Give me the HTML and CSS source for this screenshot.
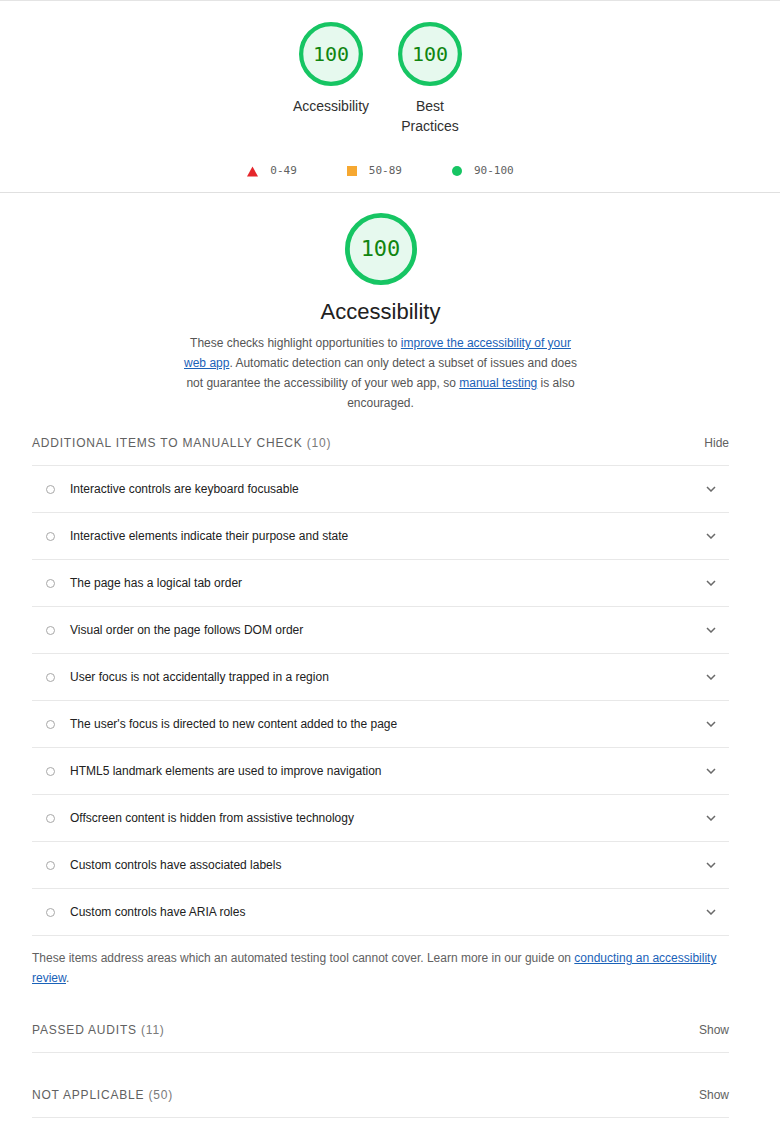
FILE: index.html
```html
<!DOCTYPE html>
<html lang="en">
<head>
<meta charset="utf-8">
<title>Lighthouse Report</title>
<link rel="stylesheet" href="styles.css">
</head>
<body>
<div class="page">
  <header class="scores">
    <div class="gauges">
      <a class="gauge" href="#a11y">
        <svg class="gauge-svg" viewBox="0 0 120 120"><circle class="g-base" cx="60" cy="60" r="56"/><circle class="g-arc" cx="60" cy="60" r="56"/></svg>
        <span class="gauge-num">100</span>
        <span class="gauge-label">Accessibility</span>
      </a>
      <a class="gauge" href="#bp">
        <svg class="gauge-svg" viewBox="0 0 120 120"><circle class="g-base" cx="60" cy="60" r="56"/><circle class="g-arc" cx="60" cy="60" r="56"/></svg>
        <span class="gauge-num">100</span>
        <span class="gauge-label">Best Practices</span>
      </a>
    </div>
    <div class="legend">
      <span class="legend-item"><svg class="legend-icon" viewBox="0 0 10 10"><polygon points="5,0.5 10,9.5 0,9.5" fill="#e5262b"/></svg>0-49</span>
      <span class="legend-item"><span class="legend-square"></span>50-89</span>
      <span class="legend-item"><span class="legend-dot"></span>90-100</span>
    </div>
  </header>

  <section class="category" id="a11y">
    <div class="cat-head">
      <div class="gauge big">
        <svg class="gauge-svg" viewBox="0 0 120 120"><circle class="g-base" cx="60" cy="60" r="56"/><circle class="g-arc" cx="60" cy="60" r="56"/></svg>
        <span class="gauge-num">100</span>
      </div>
      <h2 class="cat-title">Accessibility</h2>
      <p class="cat-desc">These checks highlight opportunities to <a href="#">improve the accessibility of your web app</a>. Automatic detection can only detect a subset of issues and does not guarantee the accessibility of your web app, so <a href="#">manual testing</a> is also encouraged.</p>
    </div>

    <div class="group">
      <div class="group-head">
        <span class="group-title">Additional items to manually check <span class="count">(10)</span></span>
        <span class="toggle">Hide</span>
      </div>
      <ul class="audits">
        <li class="audit"><span class="manual-icon"></span><span class="audit-title">Interactive controls are keyboard focusable</span><svg class="chevron" viewBox="0 0 10 6"><path d="M1 1 L5 5 L9 1"/></svg></li>
        <li class="audit"><span class="manual-icon"></span><span class="audit-title">Interactive elements indicate their purpose and state</span><svg class="chevron" viewBox="0 0 10 6"><path d="M1 1 L5 5 L9 1"/></svg></li>
        <li class="audit"><span class="manual-icon"></span><span class="audit-title">The page has a logical tab order</span><svg class="chevron" viewBox="0 0 10 6"><path d="M1 1 L5 5 L9 1"/></svg></li>
        <li class="audit"><span class="manual-icon"></span><span class="audit-title">Visual order on the page follows DOM order</span><svg class="chevron" viewBox="0 0 10 6"><path d="M1 1 L5 5 L9 1"/></svg></li>
        <li class="audit"><span class="manual-icon"></span><span class="audit-title">User focus is not accidentally trapped in a region</span><svg class="chevron" viewBox="0 0 10 6"><path d="M1 1 L5 5 L9 1"/></svg></li>
        <li class="audit"><span class="manual-icon"></span><span class="audit-title">The user's focus is directed to new content added to the page</span><svg class="chevron" viewBox="0 0 10 6"><path d="M1 1 L5 5 L9 1"/></svg></li>
        <li class="audit"><span class="manual-icon"></span><span class="audit-title">HTML5 landmark elements are used to improve navigation</span><svg class="chevron" viewBox="0 0 10 6"><path d="M1 1 L5 5 L9 1"/></svg></li>
        <li class="audit"><span class="manual-icon"></span><span class="audit-title">Offscreen content is hidden from assistive technology</span><svg class="chevron" viewBox="0 0 10 6"><path d="M1 1 L5 5 L9 1"/></svg></li>
        <li class="audit"><span class="manual-icon"></span><span class="audit-title">Custom controls have associated labels</span><svg class="chevron" viewBox="0 0 10 6"><path d="M1 1 L5 5 L9 1"/></svg></li>
        <li class="audit"><span class="manual-icon"></span><span class="audit-title">Custom controls have ARIA roles</span><svg class="chevron" viewBox="0 0 10 6"><path d="M1 1 L5 5 L9 1"/></svg></li>
      </ul>
      <p class="group-desc">These items address areas which an automated testing tool cannot cover. Learn more in our guide on <a href="#">conducting an accessibility review</a>.</p>
    </div>

    <div class="group collapsed first-collapsed">
      <div class="group-head">
        <span class="group-title">Passed audits <span class="count">(11)</span></span>
        <span class="toggle">Show</span>
      </div>
    </div>

    <div class="group collapsed">
      <div class="group-head">
        <span class="group-title">Not applicable <span class="count">(50)</span></span>
        <span class="toggle">Show</span>
      </div>
    </div>
  </section>
</div>
</body>
</html>
```

FILE: styles.css
```css
* { box-sizing: border-box; }

html, body {
  margin: 0;
  padding: 0;
  background: #ffffff;
}

body {
  font-family: "Liberation Sans", Arial, sans-serif;
  font-size: 12px;
  color: #212121;
}

.page {
  width: 761px;
}

/* ---------- top scores ---------- */
.scores {
  border-top: 1px solid #e4e4e4;
  border-bottom: 1px solid #e0e0e0;
  width: 780px;
  padding: 21px 19px 14px 0;
}

.gauges {
  display: flex;
  justify-content: center;
  gap: 19px;
}

.gauge {
  position: relative;
  display: flex;
  flex-direction: column;
  align-items: center;
  width: 80px;
  text-decoration: none;
  color: #212121;
}

.gauge-svg {
  display: block;
  width: 64px;
  height: 64px;
}

.g-base {
  fill: #e6f9ee;
  stroke: none;
}

.g-arc {
  fill: none;
  stroke: #16c563;
  stroke-width: 8;
}

.gauge-num {
  position: absolute;
  top: 0;
  left: 0;
  right: 0;
  height: 64px;
  line-height: 64px;
  text-align: center;
  font-family: "DejaVu Sans Mono", monospace;
  font-size: 20px;
  color: #108510;
}

.gauge-label {
  margin-top: 10px;
  font-size: 14px;
  line-height: 20px;
  text-align: center;
  color: #303030;
}

.legend {
  display: flex;
  justify-content: center;
  gap: 50px;
  margin-top: 27px;
  margin-bottom: -1px;
  font-family: "DejaVu Sans Mono", monospace;
  font-size: 11px;
  line-height: 16px;
  color: #616161;
}

.legend-item {
  display: flex;
  align-items: center;
  gap: 12px;
}

.legend-icon {
  width: 11px;
  height: 11px;
  display: block;
}

.legend-square {
  display: block;
  width: 10px;
  height: 10px;
  background: #f6a831;
}

.legend-dot {
  display: block;
  width: 10px;
  height: 10px;
  border-radius: 50%;
  background: #16c563;
}

/* ---------- category ---------- */
.category {
  padding: 20px 32px 0 32px;
}

.cat-head {
  display: flex;
  flex-direction: column;
  align-items: center;
}

.gauge.big {
  width: 72px;
}

.gauge.big .gauge-svg {
  width: 72px;
  height: 72px;
}

.gauge.big .gauge-num {
  height: 72px;
  line-height: 72px;
  font-size: 22px;
}

.cat-title {
  margin: 14px 0 0 0;
  font-weight: normal;
  font-size: 22px;
  line-height: 26px;
  color: #212121;
}

.cat-desc {
  margin: 8px 0 0 0;
  max-width: 400px;
  text-align: center;
  font-size: 12px;
  line-height: 20px;
  color: #555555;
}

a {
  color: #1a62b8;
}

.group-head {
  display: flex;
  align-items: center;
  justify-content: space-between;
  height: 47px;
  padding-top: 2px;
  border-bottom: 1px solid #e8e8e8;
  margin-top: 6px;
}

.group-title {
  text-transform: uppercase;
  letter-spacing: 0.8px;
  font-size: 12px;
  color: #616161;
}

.count {
  color: #7a7a7a;
}

.toggle {
  font-size: 12px;
  color: #616161;
}

.audits {
  list-style: none;
  margin: 0;
  padding: 0;
}

.audit {
  display: flex;
  align-items: center;
  height: 47px;
  border-bottom: 1px solid #e8e8e8;
  padding: 0 13px 0 14px;
}

.manual-icon {
  display: block;
  width: 9px;
  height: 9px;
  border: 1.5px solid #a8a8a8;
  border-radius: 50%;
  flex: none;
}

.audit-title {
  flex: 1;
  margin-left: 15px;
  color: #212121;
}

.chevron {
  width: 10px;
  height: 6px;
  display: block;
  fill: none;
  stroke: #6a6a6a;
  stroke-width: 1.5;
}

.group-desc {
  margin: 12px 0 0 0;
  font-size: 12px;
  line-height: 20px;
  color: #616161;
}

.collapsed .group-head {
  margin-top: 18px;
}
```
